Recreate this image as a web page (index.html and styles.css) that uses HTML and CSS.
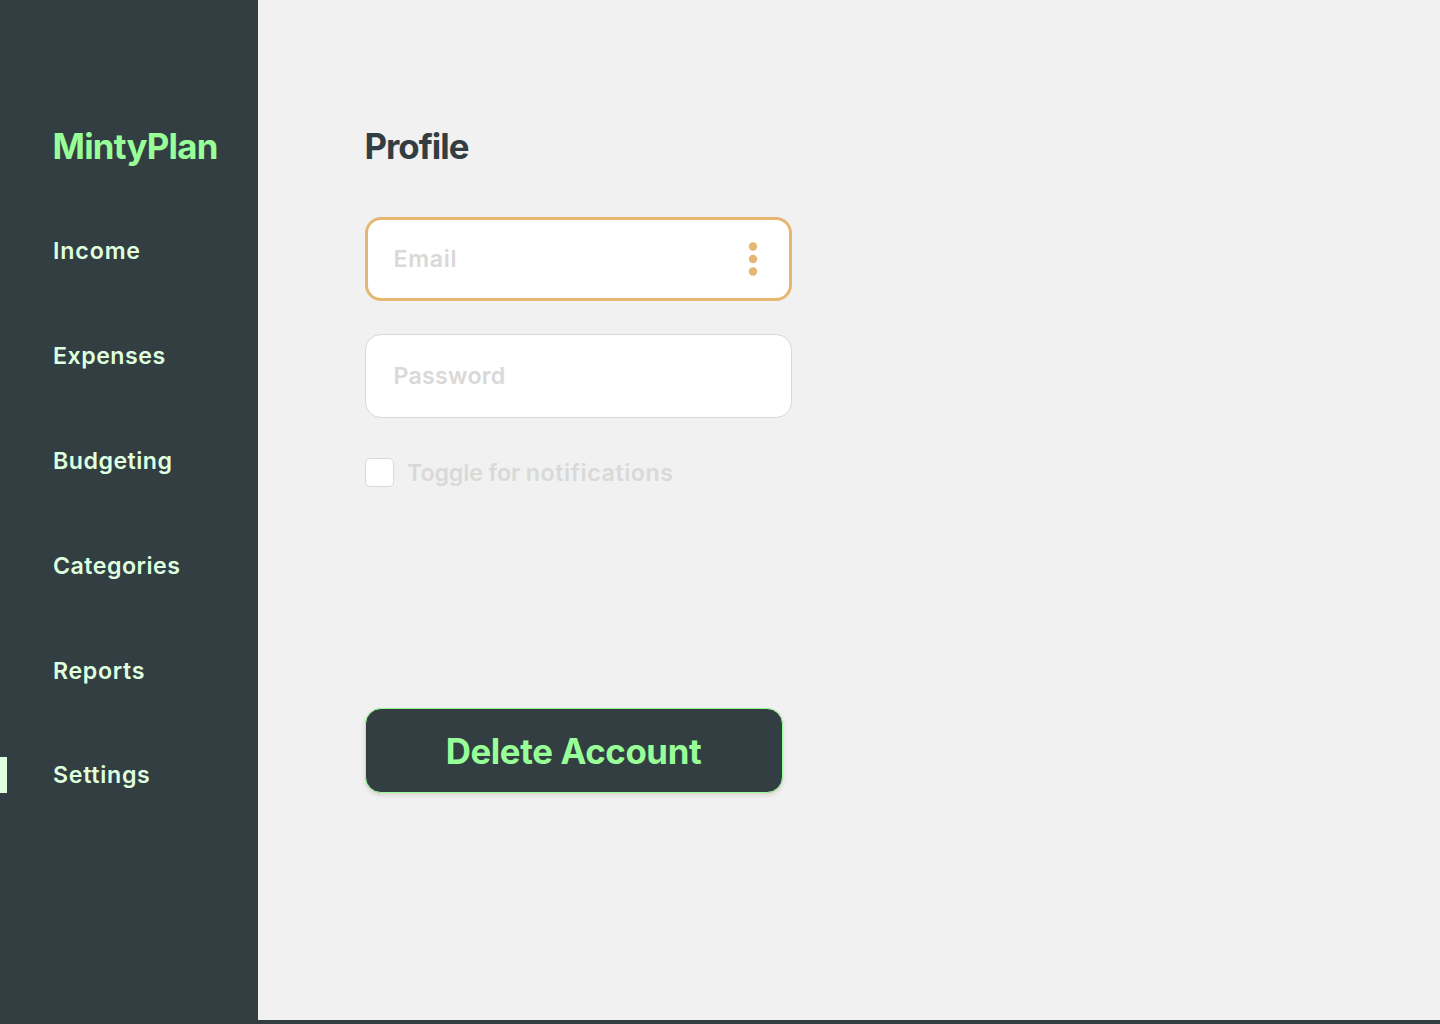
FILE: index.html
```html
<!DOCTYPE html>
<html lang="en">
<head>
<meta charset="utf-8">
<title>MintyPlan</title>
<link rel="stylesheet" href="styles.css">
</head>
<body>
<div class="app">
  <aside class="sidebar">
    <div class="logo">MintyPlan</div>
    <nav class="nav">
      <a class="nav-item"><span class="income">Income</span></a>
      <a class="nav-item"><span class="expenses">Expenses</span></a>
      <a class="nav-item"><span class="budgeting">Budgeting</span></a>
      <a class="nav-item"><span class="categories">Categories</span></a>
      <a class="nav-item"><span class="reports">Reports</span></a>
      <a class="nav-item active"><span class="settings">Settings</span></a>
    </nav>
  </aside>
  <main class="content">
    <h1 class="title">Profile</h1>
    <div class="field focused">
      <span class="email">Email</span>
      <svg class="dots" width="10" height="36" viewBox="0 0 10 36" fill="currentColor"><circle cx="5" cy="5.5" r="4.2"/><circle cx="5" cy="18" r="4.2"/><circle cx="5" cy="30.5" r="4.2"/></svg>
    </div>
    <div class="field"><span class="password">Password</span></div>
    <label class="toggle"><span class="box"></span><span class="toggle-text">Toggle for <span class="wide">notifications</span></span></label>
    <button class="delete"><span class="delete-text">Delete Account</span></button>
  </main>
</div>
</body>
</html>
```
FILE: styles.css
```css
* { box-sizing: border-box; }
body {
  margin: 0;
  background: #333e43;
  font-family: Inter, "Liberation Sans", sans-serif;
  font-size: 23.2px;
  font-weight: 600;
}
.app { display: flex; height: 1024px; padding-bottom: 4px; }
.sidebar { width: 258px; flex: none; padding-top: 124px; }
.logo, .title {
  margin: 0;
  font-size: 34.8px;
  line-height: 44px;
  font-weight: 700;
  white-space: nowrap;
}
.logo { padding-left: 52.5px; color: #98ff98; letter-spacing: -0.75px; }
.nav { display: flex; flex-direction: column; gap: 68.88px; margin-top: 65px; }
.nav-item {
  height: 36px;
  line-height: 36px;
  padding-left: 46px;
  border-left: 7px solid transparent;
  color: #dfffdf;
}
.active { border-color: #dfffdf; }
.income { letter-spacing: 0.85px; }
.expenses, .budgeting, .categories { letter-spacing: 0.48px; }
.reports { letter-spacing: 0.65px; }
.settings { letter-spacing: 0.7px; }
.content {
  flex: 1;
  display: flex;
  flex-direction: column;
  align-items: flex-start;
  padding: 124px 0 0 107px;
  background: #f1f1f1;
  color: #d9d9d9;
}
.title { color: #333e43; letter-spacing: -1px; margin: 0 0 49px -0.5px; }
.field {
  width: 427px;
  height: 84px;
  display: flex;
  align-items: center;
  justify-content: space-between;
  padding: 0 33px 0 27.5px;
  margin-bottom: 33px;
  background: #fff;
  border: 1px solid #d9d9d9;
  border-radius: 16px;
}
.focused { border: 3px solid #e5b772; padding: 0 31px 0 25.5px; }
.email { letter-spacing: 0.7px; }
.password { letter-spacing: 0.25px; }
.dots { color: #e5b772; }
.toggle { display: flex; align-items: center; gap: 13px; height: 29px; margin-top: 7px; }
.box { width: 29px; height: 29px; background: #fff; border: 1px solid #d9d9d9; border-radius: 5px; }
.toggle-text { letter-spacing: -0.1px; }
.wide { letter-spacing: 0.6px; }
.delete {
  width: 418px;
  height: 85px;
  margin-top: 221px;
  padding: 0 1px 0 0;
  font: 700 34.8px Inter, "Liberation Sans", sans-serif;
  letter-spacing: -0.38px;
  color: #98ff98;
  background: #333e43;
  border: 1px solid #98ff98;
  border-radius: 16px;
  box-shadow: 0 2px 4px rgba(90, 65, 0, 0.16);
}
```
